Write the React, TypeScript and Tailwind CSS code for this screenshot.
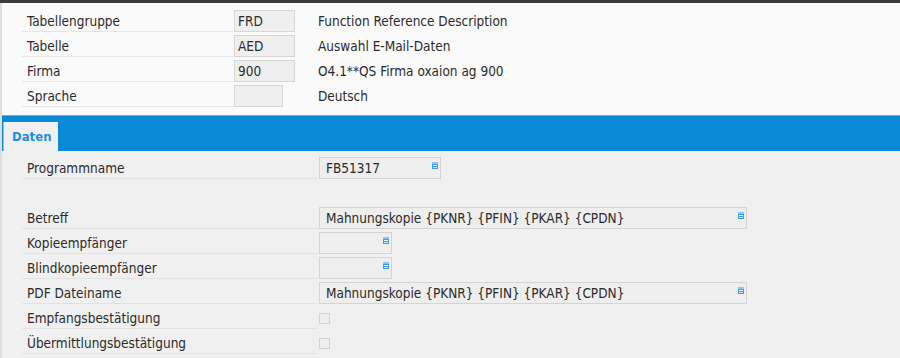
import React from 'react';

const font = { fontFamily: '"DejaVu Sans Condensed", "DejaVu Sans", Verdana, sans-serif' };

// small "value help" marker in the top right corner of some fields
const HelpIcon = () => (
  <svg width="6" height="7" viewBox="0 0 6 7" className="absolute right-[2px] top-[4px]">
    <rect x="0" y="0" width="6" height="7" fill="#3d9ee6" />
    <rect x="0" y="0" width="6" height="2" fill="#8cc6f0" />
    <rect x="1" y="3" width="4" height="1" fill="#ffffff" />
    <rect x="1" y="5" width="4" height="1" fill="#cfe6f8" />
  </svg>
);

interface HeaderRow {
  label: string;
  value: string;
  desc: string;
  narrow?: boolean;
}

const headerRows: HeaderRow[] = [
  { label: 'Tabellengruppe', value: 'FRD', desc: 'Function Reference Description' },
  { label: 'Tabelle', value: 'AED', desc: 'Auswahl E-Mail-Daten' },
  { label: 'Firma', value: '900', desc: 'O4.1**QS Firma oxaion ag 900' },
  { label: 'Sprache', value: '', desc: 'Deutsch', narrow: true },
];

type FieldKind = 'short' | 'tiny' | 'wide' | 'check' | 'blank';

interface DataRow {
  label: string;
  kind: FieldKind;
  value?: string;
}

const dataRows: DataRow[] = [
  { label: 'Programmname', kind: 'short', value: 'FB51317' },
  { label: '', kind: 'blank' },
  { label: 'Betreff', kind: 'wide', value: 'Mahnungskopie {PKNR} {PFIN} {PKAR} {CPDN}' },
  { label: 'Kopieempfänger', kind: 'tiny' },
  { label: 'Blindkopieempfänger', kind: 'tiny' },
  { label: 'PDF Dateiname', kind: 'wide', value: 'Mahnungskopie {PKNR} {PFIN} {PKAR} {CPDN}' },
  { label: 'Empfangsbestätigung', kind: 'check' },
  { label: 'Übermittlungsbestätigung', kind: 'check' },
];

const Field = ({ row }: { row: DataRow }) => {
  if (row.kind === 'blank') return null;
  if (row.kind === 'check') {
    return (
      <div className="h-[22px] flex items-center">
        <div className="w-[11px] h-[11px] border border-[#d2d2d2] bg-[#efefef]" />
      </div>
    );
  }
  const width = row.kind === 'short' ? 'w-[122px]' : row.kind === 'tiny' ? 'w-[73px]' : 'w-[428px]';
  return (
    <div
      className={`relative h-[22px] ${width} border border-[#d4d4d4] bg-[#eeeeee] pl-[6px] flex items-center`}
    >
      {row.value}
      <HelpIcon />
    </div>
  );
};

export default function App() {
  return (
    <div className="w-[900px] h-[358px] overflow-hidden flex flex-col text-[13.5px] text-[#2b2b2b]" style={font}>
      <div className="h-[3px] bg-[#3c3c3c]" />
      <div className="flex-1 flex flex-col border-l-2 border-[#dedede]">
        {/* Header */}
        <div className="bg-[#fafafa] pt-[7px] pb-[8px] pl-[20px] flex flex-col gap-[3px]">
          {headerRows.map((r) => (
            <div key={r.label} className="flex h-[22px]">
              <div className="w-[211px] border-b border-[#e6e6e6] pl-[5px] pt-[1px] flex items-center">{r.label}</div>
              <div className="w-[85px] pl-[1px]">
                <div
                  className={`h-[22px] ${r.narrow ? 'w-[49px]' : 'w-[61px]'} border border-[#d6d6d6] bg-[#efefef] pl-[3px] pt-[1px] flex items-center`}
                >
                  {r.value}
                </div>
              </div>
              <div className="flex items-center pt-[1px]">{r.desc}</div>
            </div>
          ))}
        </div>

        {/* Tab strip */}
        <div className="h-[36px] bg-[#0a8ad6] border-t border-[#5db4ea] flex items-end pl-[1px]">
          <div className="h-[29px] w-[55px] bg-[#f0f0f0] border-l border-[#7cc3ee] flex items-center pl-[8px] text-[13px] font-bold text-[#1b8fdc]">
            Daten
          </div>
        </div>

        {/* Content */}
        <div className="flex-1 bg-[#f0f0f0] pt-[6px] pl-[20px] flex flex-col gap-[3px]">
          {dataRows.map((r, i) => (
            <div key={i} className="flex h-[22px]">
              <div
                className={`w-[296px] pl-[5px] pt-[1px] flex items-center ${r.kind === 'blank' ? '' : 'border-b border-[#e2e2e2]'}`}
              >
                {r.label}
              </div>
              <div className="pl-[1px]">
                <Field row={r} />
              </div>
            </div>
          ))}
        </div>
      </div>
    </div>
  );
}
